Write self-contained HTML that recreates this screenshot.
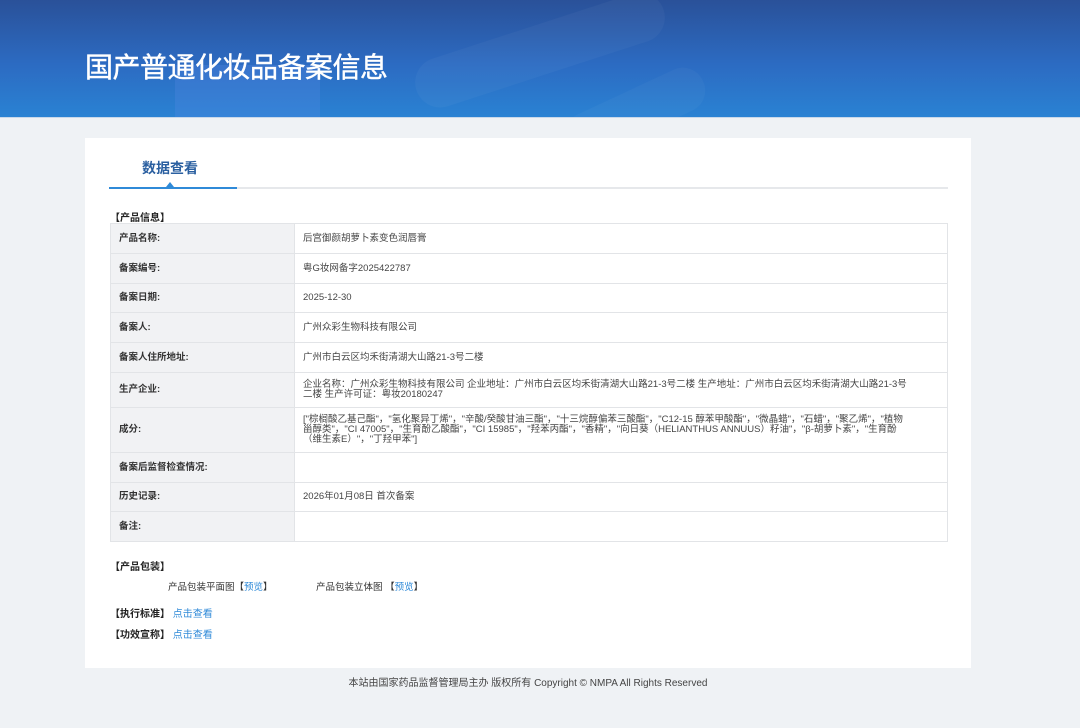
<!DOCTYPE html>
<html><head><meta charset="utf-8"><style>
*{margin:0;padding:0;box-sizing:border-box}
body{width:1080px;height:728px;background:#eff2f5;font-family:"Liberation Sans","Noto Sans CJK SC",sans-serif;position:relative;overflow:hidden;color:#333}
.hd{position:absolute;left:0;top:0;width:1080px;height:118px;background:linear-gradient(180deg,#2a5199 0%,#2c6bc2 55%,#2a82d3 100%);overflow:hidden;border-bottom:1px solid #c8d8ea}
.hd .b1{position:absolute;left:410px;top:25px;width:260px;height:50px;border-radius:25px;background:rgba(255,255,255,.035);transform:rotate(-18deg)}
.hd .b2{position:absolute;left:175px;top:65px;width:145px;height:80px;background:rgba(90,140,230,.25)}
.hd .b3{position:absolute;left:560px;top:90px;width:150px;height:45px;border-radius:22px;background:rgba(255,255,255,.03);transform:rotate(-25deg)}
.hd h1{position:absolute;left:85px;top:46px;font-size:28px;font-weight:normal;color:#fff;letter-spacing:-0.5px;-webkit-text-stroke:0.4px #fff}
.card{position:absolute;left:85px;top:138px;width:886px;height:530px;background:#fff}
.tab{position:absolute;left:57px;top:20px;font-size:14px;font-weight:bold;color:#2a5fa0}
.tl{position:absolute;left:24px;top:49px;width:839px;height:2px;background:#e6e8eb}
.tl i{position:absolute;left:0;top:0;width:128px;height:2px;background:#2f8ad8}
.tl b{position:absolute;left:57px;top:-5px;border:4px solid transparent;border-bottom:5px solid #2f8ad8;border-top:0}
.sec{position:absolute;font-size:10px;font-weight:bold;color:#222}
table{position:absolute;left:25px;top:85px;width:838px;border-collapse:collapse;border:1px solid #b6c7dc;font-size:9.5px}
td{border:1px solid #e2e4e7;padding:0 8px;vertical-align:middle;line-height:10px}
td.l{width:184px;background:#f1f2f4;font-weight:bold;color:#333}
td.v{color:#444;padding-right:36px}
.tx{position:absolute;font-size:9.5px;color:#333}
a{color:#2f8ad8;text-decoration:none}
.ft{position:absolute;top:674px;left:0;width:1056px;text-align:center;font-size:10px;color:#444}
</style></head><body>
<div class="hd"><div class="b1"></div><div class="b2"></div><div class="b3"></div><h1>国产普通化妆品备案信息</h1></div>
<div class="card">
<div class="tab">数据查看</div>
<div class="tl"><i></i><b></b></div>
<div class="sec" style="left:25px;top:71px">【产品信息】</div>
<table>
<tr style="height:30px"><td class="l">产品名称:</td><td class="v">后宫御颜胡萝卜素变色润唇膏</td></tr>
<tr style="height:30px"><td class="l">备案编号:</td><td class="v">粤G妆网备字2025422787</td></tr>
<tr style="height:29px"><td class="l">备案日期:</td><td class="v">2025-12-30</td></tr>
<tr style="height:30px"><td class="l">备案人:</td><td class="v">广州众彩生物科技有限公司</td></tr>
<tr style="height:30px"><td class="l">备案人住所地址:</td><td class="v">广州市白云区均禾街清湖大山路21-3号二楼</td></tr>
<tr style="height:35px"><td class="l">生产企业:</td><td class="v">企业名称：广州众彩生物科技有限公司 企业地址：广州市白云区均禾街清湖大山路21-3号二楼 生产地址：广州市白云区均禾街清湖大山路21-3号二楼 生产许可证：粤妆20180247</td></tr>
<tr style="height:45px"><td class="l">成分:</td><td class="v">["棕榈酸乙基己酯"，"氢化聚异丁烯"，"辛酸/癸酸甘油三酯"，"十三烷醇偏苯三酸酯"，"C12-15 醇苯甲酸酯"，"微晶蜡"，"石蜡"，"聚乙烯"，"植物甾醇类"，"CI 47005"，"生育酚乙酸酯"，"CI 15985"，"羟苯丙酯"，"香精"，"向日葵（HELIANTHUS ANNUUS）籽油"，"β-胡萝卜素"，"生育酚（维生素E）"，"丁羟甲苯"]</td></tr>
<tr style="height:30px"><td class="l">备案后监督检查情况:</td><td class="v"></td></tr>
<tr style="height:29px"><td class="l">历史记录:</td><td class="v">2026年01月08日 首次备案</td></tr>
<tr style="height:30px"><td class="l">备注:</td><td class="v"></td></tr>
</table>
<div class="sec" style="left:25px;top:420px">【产品包装】</div>
<div class="tx" style="left:83px;top:441px">产品包装平面图【<a>预览</a>】</div>
<div class="tx" style="left:231px;top:441px">产品包装立体图 【<a>预览</a>】</div>
<div class="sec" style="left:25px;top:467px">【执行标准】 <a style="font-weight:normal">点击查看</a></div>
<div class="sec" style="left:25px;top:488px">【功效宣称】 <a style="font-weight:normal">点击查看</a></div>
</div>
<div class="ft">本站由国家药品监督管理局主办 版权所有 Copyright © NMPA All Rights Reserved</div>
</body></html>
